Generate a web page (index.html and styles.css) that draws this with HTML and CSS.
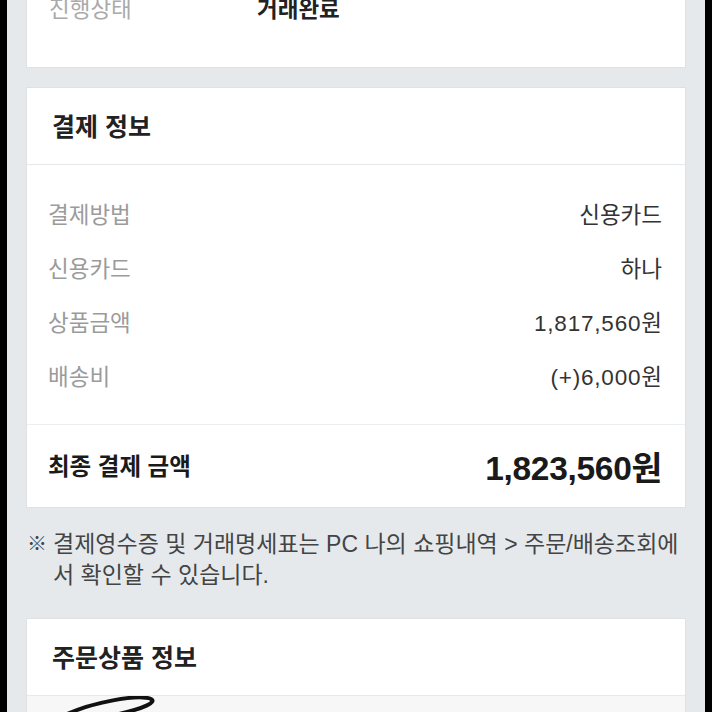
FILE: index.html
```html
<!DOCTYPE html>
<html lang="ko">
<head>
    <meta charset="UTF-8">
    <meta name="viewport" content="width=device-width, initial-scale=1.0">
    <title>주문상세</title>
    <link rel="stylesheet" href="styles.css">
</head>
<body>
    <div class="screen">
        <section class="card status">
            <div class="status-row">
                <span class="status-label">진행상태</span>
                <span class="status-value">거래완료</span>
            </div>
        </section>

        <section class="card">
            <h2 class="card-title">결제 정보</h2>
            <div class="pay-list">
                <div class="pay-row">
                    <span class="pay-label">결제방법</span>
                    <span class="pay-value">신용카드</span>
                </div>
                <div class="pay-row">
                    <span class="pay-label">신용카드</span>
                    <span class="pay-value">하나</span>
                </div>
                <div class="pay-row">
                    <span class="pay-label">상품금액</span>
                    <span class="pay-value num">1,817,560원</span>
                </div>
                <div class="pay-row">
                    <span class="pay-label">배송비</span>
                    <span class="pay-value num">(+)6,000원</span>
                </div>
            </div>
            <div class="total-row">
                <span class="total-label">최종 결제 금액</span>
                <span class="total-value">1,823,560원</span>
            </div>
        </section>

        <p class="notice">
            <span class="notice-mark">※</span>
            <span class="notice-text">결제영수증 및 거래명세표는 PC 나의 쇼핑내역 &gt; 주문/배송조회에서 확인할 수 있습니다.</span>
        </p>

        <section class="card">
            <h2 class="card-title">주문상품 정보</h2>
            <div class="product">
                <svg class="product-logo" width="120" height="30" viewBox="0 0 120 30">
                    <path d="M10 22 C 40 6, 90 -2, 102 3 C 108 6, 96 12, 70 18" fill="none" stroke="#111" stroke-width="4" stroke-linecap="round"/>
                </svg>
            </div>
        </section>
    </div>
</body>
</html>
```

FILE: styles.css
```css
html, body {
    margin: 0;
    padding: 0;
    background-color: #000;
}
body {
    font-family: 'Liberation Sans', 'Noto Sans CJK KR', sans-serif;
    color: #333;
}
.screen {
    margin: 0 7px;
    height: 712px;
    overflow: hidden;
    padding: 0 20px;
    background-color: #e6e9ec;
}
.card {
    background: #fff;
    box-shadow: 0 0 0 1px #dfe2e5;
    margin-bottom: 21px;
}

/* 진행상태 (위로 잘린 카드) */
.status {
    margin-top: -5px;
    padding: 0 22px 42px 22px;
}
.status-row {
    display: flex;
    line-height: 30px;
    font-size: 22.5px;
}
.status-label {
    width: 208px;
    color: #aaa;
}
.status-value {
    font-weight: 700;
    color: #222;
}

.card-title {
    margin: 0;
    height: 76px;
    line-height: 78px;
    padding: 0 25px;
    font-size: 25px;
    font-weight: 700;
    color: #222;
    border-bottom: 1px solid #e6e8ea;
}

.pay-list {
    padding: 21px 23px 22px 21px;
    border-bottom: 1px solid #eceef0;
}
.pay-row {
    display: flex;
    justify-content: space-between;
    align-items: center;
    height: 54px;
    font-size: 22.5px;
}
.pay-label {
    color: #9b9b9b;
}
.pay-value {
    color: #333;
}
.pay-value.num {
    letter-spacing: 0.8px;
    margin-right: -0.8px;
}

.total-row {
    display: flex;
    justify-content: space-between;
    align-items: center;
    height: 80px;
    padding: 0 23px 2px 21px;
}
.total-label {
    font-size: 23.5px;
    font-weight: 700;
    color: #1a1a1a;
}
.total-value {
    font-size: 33.5px;
    font-weight: 700;
    color: #1a1a1a;
    letter-spacing: -0.3px;
}

.notice {
    display: flex;
    margin: -21px 0 0;
    padding: 22px 6px 28px 0;
    font-size: 23px;
    line-height: 31px;
    color: #444;
}
.notice-mark {
    flex: none;
    width: 26px;
    font-size: 20px;
}
.notice-text {
    flex: 1;
}

.product {
    height: 60px;
    background: #f7f7f7;
    padding-left: 22px;
}
.product-logo {
    display: block;
}
```
